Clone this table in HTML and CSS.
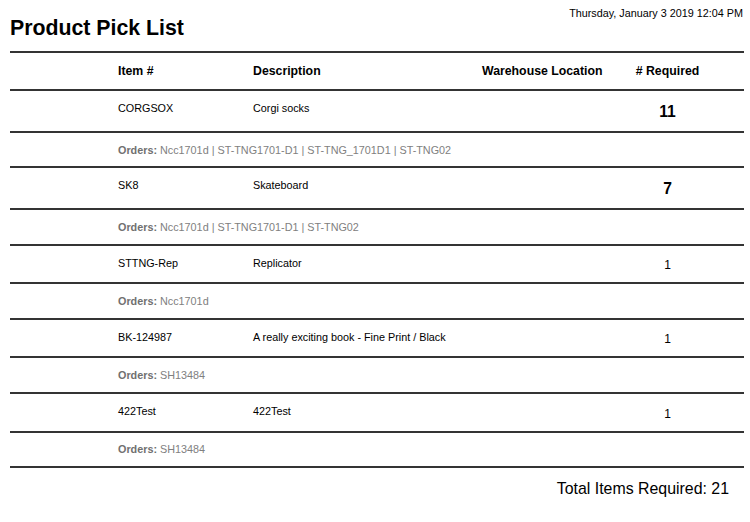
FILE: index.html
```html
<!DOCTYPE html>
<html lang="en">
<head>
<meta charset="utf-8">
<title>Product Pick List</title>
<link rel="stylesheet" href="styles.css">
</head>
<body>
<div class="page">
  <header class="top">
    <h1 class="title">Product Pick List</h1>
    <div class="date">Thursday, January 3 2019 12:04 PM</div>
  </header>
  <div class="list">
    <div class="row head">
      <span></span>
      <span>Item #</span>
      <span>Description</span>
      <span>Warehouse Location</span>
      <span class="qty">&#35; Required</span>
    </div>

    <div class="row item multi">
      <span></span><span class="cell">CORGSOX</span><span class="cell">Corgi socks</span><span class="cell"></span><span class="qty">11</span>
    </div>
    <div class="row orders">
      <span></span><span class="ord"><b>Orders:</b> Ncc1701d | ST-TNG1701-D1 | ST-TNG_1701D1 | ST-TNG02</span>
    </div>

    <div class="row item multi">
      <span></span><span class="cell">SK8</span><span class="cell">Skateboard</span><span class="cell"></span><span class="qty">7</span>
    </div>
    <div class="row orders">
      <span></span><span class="ord"><b>Orders:</b> Ncc1701d | ST-TNG1701-D1 | ST-TNG02</span>
    </div>

    <div class="row item">
      <span></span><span class="cell">STTNG-Rep</span><span class="cell">Replicator</span><span class="cell"></span><span class="qty">1</span>
    </div>
    <div class="row orders">
      <span></span><span class="ord"><b>Orders:</b> Ncc1701d</span>
    </div>

    <div class="row item">
      <span></span><span class="cell">BK-124987</span><span class="cell">A really exciting book - Fine Print / Black</span><span class="cell"></span><span class="qty">1</span>
    </div>
    <div class="row orders">
      <span></span><span class="ord"><b>Orders:</b> SH13484</span>
    </div>

    <div class="row item">
      <span></span><span class="cell">422Test</span><span class="cell">422Test</span><span class="cell"></span><span class="qty">1</span>
    </div>
    <div class="row orders">
      <span></span><span class="ord"><b>Orders:</b> SH13484</span>
    </div>
  </div>
  <div class="total">Total Items Required: 21</div>
</div>
</body>
</html>
```

FILE: styles.css
```css
html, body {
  margin: 0;
  padding: 0;
  background: #ffffff;
}

body {
  font-family: "Liberation Sans", Arial, sans-serif;
  color: #000;
}

.page {
  padding: 0 6px 0 10px;
}

.top {
  display: flex;
  justify-content: space-between;
  align-items: flex-start;
  height: 51.3px;
}

.title {
  margin: 16px 0 0 0;
  font-size: 21.3px;
  line-height: 24px;
  font-weight: bold;
}

.date {
  margin-top: 7px;
  padding-right: 1px;
  font-size: 10.8px;
  line-height: 13px;
}

.list {
  border-top: 2px solid #343434;
}

.row {
  display: grid;
  grid-template-columns: 108px 135px 229px 138px 95px 1fr;
  border-bottom: 2px solid #343434;
  align-items: start;
}

.head {
  height: 36px;
  line-height: 36px;
  font-size: 12.3px;
  font-weight: bold;
}

.qty {
  text-align: center;
}

.item {
  font-size: 10.8px;
}

.item .cell {
  padding: 11px 0 12.6px;
  line-height: 13px;
}

.item .qty {
  padding-top: 12.5px;
  font-size: 12px;
  line-height: 14px;
}

.item.multi .qty {
  padding: 11.5px 0 10.1px;
  font-size: 15.7px;
  line-height: 18px;
  font-weight: bold;
}

.orders {
  padding: 10.8px 0 9.8px;
  font-size: 10.8px;
  line-height: 13px;
}

.ord {
  grid-column: 2 / 7;
  color: #808080;
}

.ord b {
  color: #707070;
}

.total {
  margin-top: 12.2px;
  padding-right: 15px;
  text-align: right;
  font-size: 15.9px;
  line-height: 18px;
}
```
